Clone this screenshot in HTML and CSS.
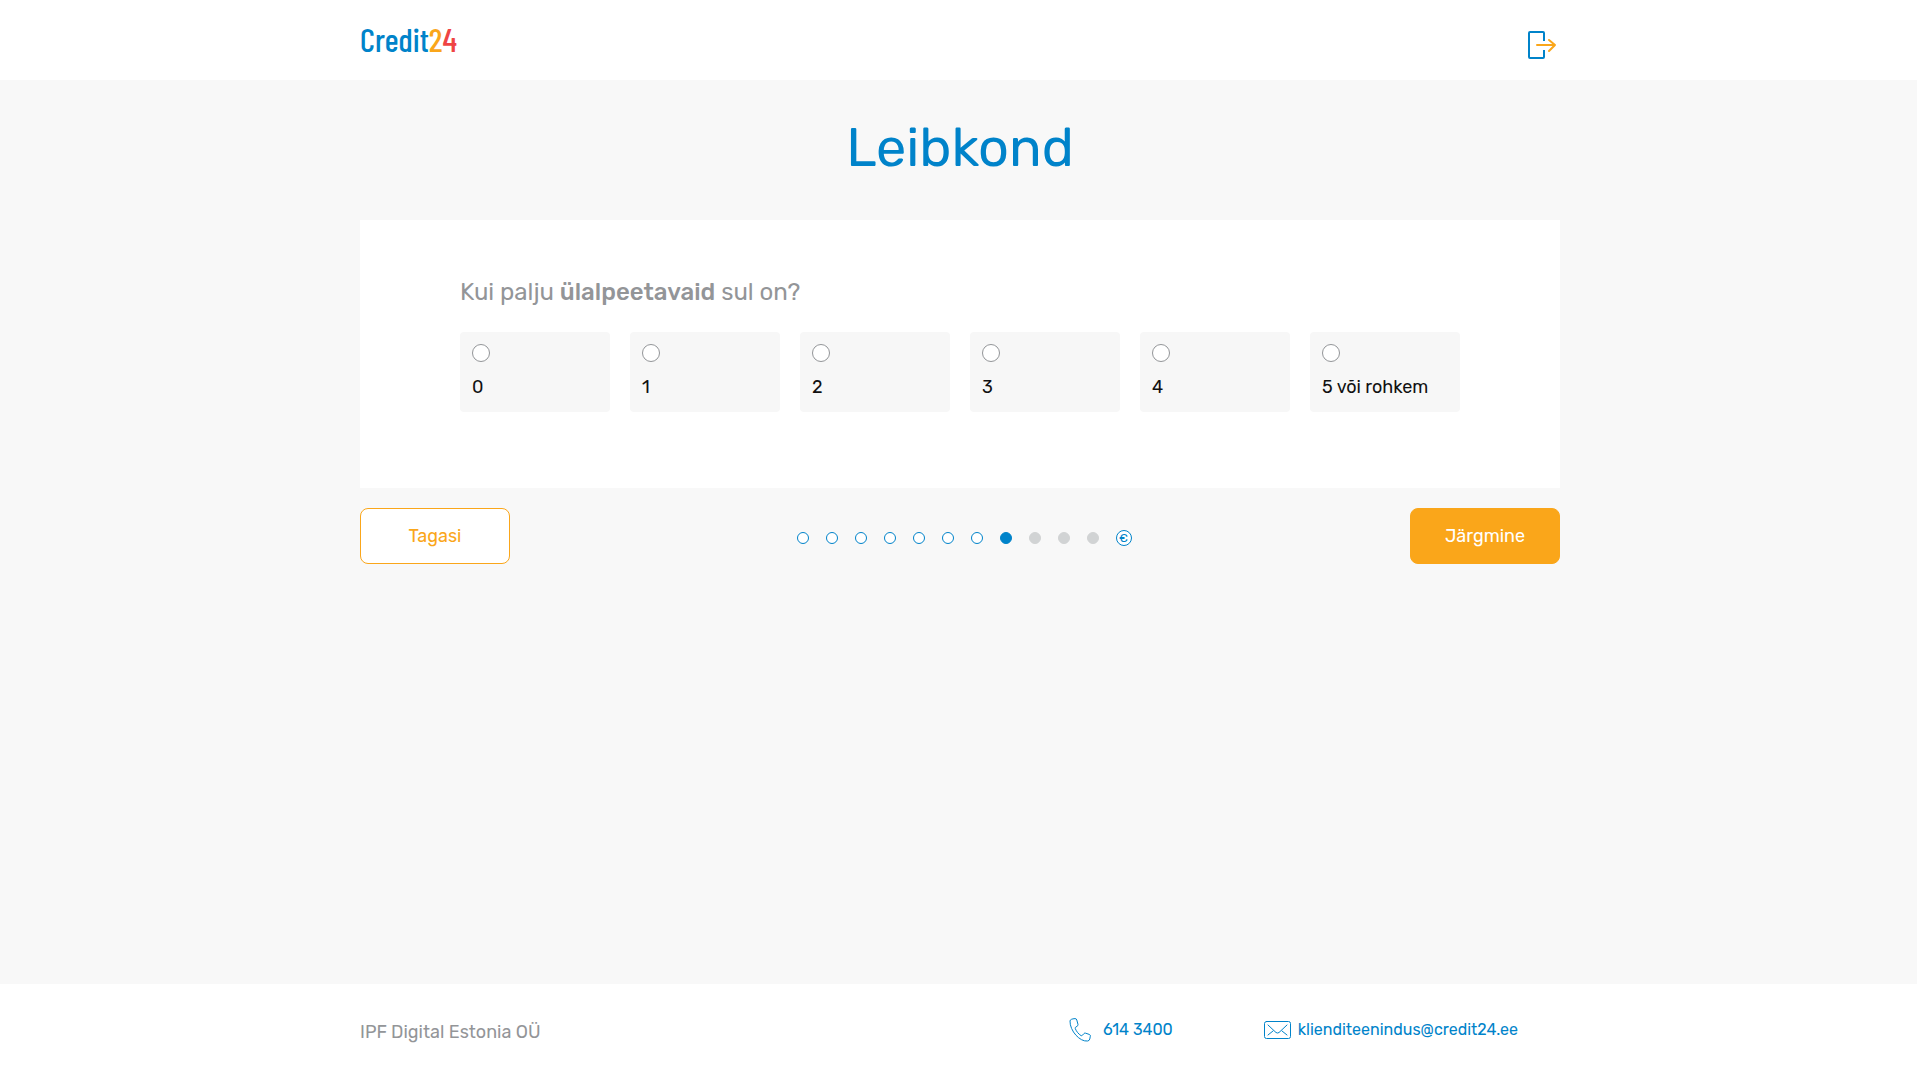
FILE: index.html
```html
<!DOCTYPE html>
<html lang="et">
<head>
  <meta charset="UTF-8">
  <meta name="viewport" content="width=device-width, initial-scale=1">
  <title>Leibkond</title>
  <link rel="stylesheet" href="styles.css">
</head>
<body>
  <header class="header">
    <div class="container header-inner">
      <a href="#" class="logo">Credit<span class="logo-two">2</span><span class="logo-four">4</span></a>
      <a href="#" class="logout" aria-label="Logi välja">
        <svg width="30" height="30" viewBox="0 0 30 30" fill="none" stroke-width="2" stroke-linecap="round" stroke-linejoin="round">
          <path stroke="#0083ca" stroke-linecap="butt" d="M17 11V3q0-1-1-1H3Q2 2 2 3v24q0 1 1 1h13q1 0 1-1v-7"/>
          <path stroke="#faa61a" d="M10 15h18M22 10l6 5-6 6"/>
        </svg>
      </a>
    </div>
  </header>

  <main class="container main">
    <h1 class="title">Leibkond</h1>
    <form>
      <fieldset class="card">
        <legend class="question">Kui palju <strong>ülalpeetavaid</strong> sul on?</legend>
        <div class="options">
          <label class="option"><input type="radio" name="dependants" value="0"><span>0</span></label>
          <label class="option"><input type="radio" name="dependants" value="1"><span>1</span></label>
          <label class="option"><input type="radio" name="dependants" value="2"><span>2</span></label>
          <label class="option"><input type="radio" name="dependants" value="3"><span>3</span></label>
          <label class="option"><input type="radio" name="dependants" value="4"><span>4</span></label>
          <label class="option"><input type="radio" name="dependants" value="5"><span>5 või rohkem</span></label>
        </div>
      </fieldset>
      <div class="actions">
        <button type="button" class="btn btn-back">Tagasi</button>
        <ol class="steps">
          <li class="step"></li>
          <li class="step"></li>
          <li class="step"></li>
          <li class="step"></li>
          <li class="step"></li>
          <li class="step"></li>
          <li class="step"></li>
          <li class="step current"></li>
          <li class="step todo"></li>
          <li class="step todo"></li>
          <li class="step todo"></li>
          <li class="step last">€</li>
        </ol>
        <button type="submit" class="btn btn-next">Järgmine</button>
      </div>
    </form>
  </main>

  <footer class="footer">
    <div class="container footer-inner">
      <span class="company">IPF Digital Estonia OÜ</span>
      <div class="contacts">
        <a href="tel:6143400" class="contact phone">
          <svg width="22" height="24" viewBox="0 0 22 24" fill="none" stroke="#0083ca" stroke-linejoin="round">
            <path d="M1 3C1 1.600 3 .8 6 .6Q7.500.6 7.800 2L9 6.500Q9.200 7.600 8 8.300L6.500 9.300Q6 9.800 6.300 10.700C7.500 13.500 9.500 16 12 17.600Q12.800 18 13.500 17.200L15 15.500Q15.700 14.800 16.700 15.200L20.500 16.500Q21.600 17 21.300 18.200L20.800 21Q20.400 22.800 18.500 23C11 24 .8 13 1 3z"/>
          </svg>
          614 3400
        </a>
        <a href="mailto:klienditeenindus@credit24.ee" class="contact mail">
          <svg width="27" height="18" viewBox="0 0 27 18" fill="none" stroke="#0083ca" stroke-linecap="round">
            <rect x=".5" y=".5" width="26" height="17" rx="2"/>
            <path d="M4 4l8 7.500q1.500 1 3 0L23 4M4 14l5-4M23 14l-5-4"/>
          </svg>
          klienditeenindus@credit24.ee
        </a>
      </div>
    </div>
  </footer>
</body>
</html>
```

FILE: styles.css
```css
* {
  box-sizing: border-box;
}
body {
  margin: 0;
  min-height: 100vh;
  display: flex;
  flex-direction: column;
  background: #f8f8f8;
  color: #111;
  font-family: Rubik, Roboto, sans-serif;
  font-size: 18px;
  line-height: 24px;
}
a {
  color: #0083ca;
  text-decoration: none;
}
.container {
  width: 100%;
  max-width: 1203px;
  margin: 0 auto;
  padding-left: 3px;
}

/* header */
.header {
  background: #fff;
}
.header-inner {
  display: flex;
  justify-content: space-between;
  align-items: center;
  height: 80px;
}
.logo {
  padding-bottom: 3px;
  font-family: "Barlow Condensed", "Roboto Condensed", "Liberation Sans Narrow", sans-serif;
  font-size: 33px;
  font-weight: 500;
}
.logo-two {
  color: #faa61a;
}
.logo-four {
  color: #ef4444;
}
.logout {
  display: flex;
  padding: 10px 3px 0 0;
}

/* form */
.main {
  flex: 1;
}
.title {
  margin: 0;
  padding: 36px 0 40px;
  color: #0083ca;
  font-size: 54px;
  font-weight: 400;
  line-height: 64px;
  text-align: center;
}
.card {
  margin: 0;
  padding: 56px 100px 76px;
  border: none;
  background: #fff;
}
.question {
  float: left;
  width: 100%;
  margin-bottom: 24px;
  padding: 0;
  color: #939598;
  font-size: 24px;
  line-height: 32px;
}
.question strong {
  font-weight: 500;
}
.options {
  clear: both;
  display: grid;
  grid-template-columns: repeat(6, 1fr);
  gap: 20px;
}
.option {
  display: flex;
  flex-direction: column;
  gap: 13px;
  padding: 12px 12px 13px;
  border-radius: 4px;
  background: #f7f7f7;
  cursor: pointer;
}
.option input {
  appearance: none;
  width: 18px;
  height: 18px;
  margin: 0;
  border: 1px solid #939598;
  border-radius: 50%;
  background: #fff;
}
.option input:checked {
  border: 5px solid #0083ca;
}
.actions {
  display: flex;
  justify-content: space-between;
  align-items: center;
  padding: 20px 0;
}
.btn {
  width: 150px;
  height: 56px;
  border: 1px solid #faa61a;
  border-radius: 8px;
  font: inherit;
  cursor: pointer;
}
.btn-back {
  background: #fff;
  color: #faa61a;
}
.btn-next {
  background: #faa61a;
  color: #fff;
}
.steps {
  display: flex;
  align-items: center;
  gap: 17px;
  margin: 0;
  padding: 4px 0 0 8px;
  list-style: none;
}
.step {
  width: 12px;
  height: 12px;
  border: 1px solid #0083ca;
  border-radius: 50%;
  background: #fff;
}
.current {
  background: #0083ca;
}
.todo {
  border-color: #d1d3d4;
  background: #d1d3d4;
}
.last {
  width: 16px;
  height: 16px;
  color: #0083ca;
  font-size: 12px;
  line-height: 14px;
  text-align: center;
}

/* footer */
.footer {
  background: #fff;
}
.footer-inner {
  display: flex;
  justify-content: space-between;
  align-items: center;
  height: 96px;
}
.company {
  color: #939598;
}
.contacts {
  display: flex;
  gap: 91px;
  padding: 0 42px 5px 0;
  font-size: 16px;
}
.contact {
  display: flex;
  align-items: center;
}
.phone {
  gap: 12px;
}
.mail {
  gap: 7px;
}
```
